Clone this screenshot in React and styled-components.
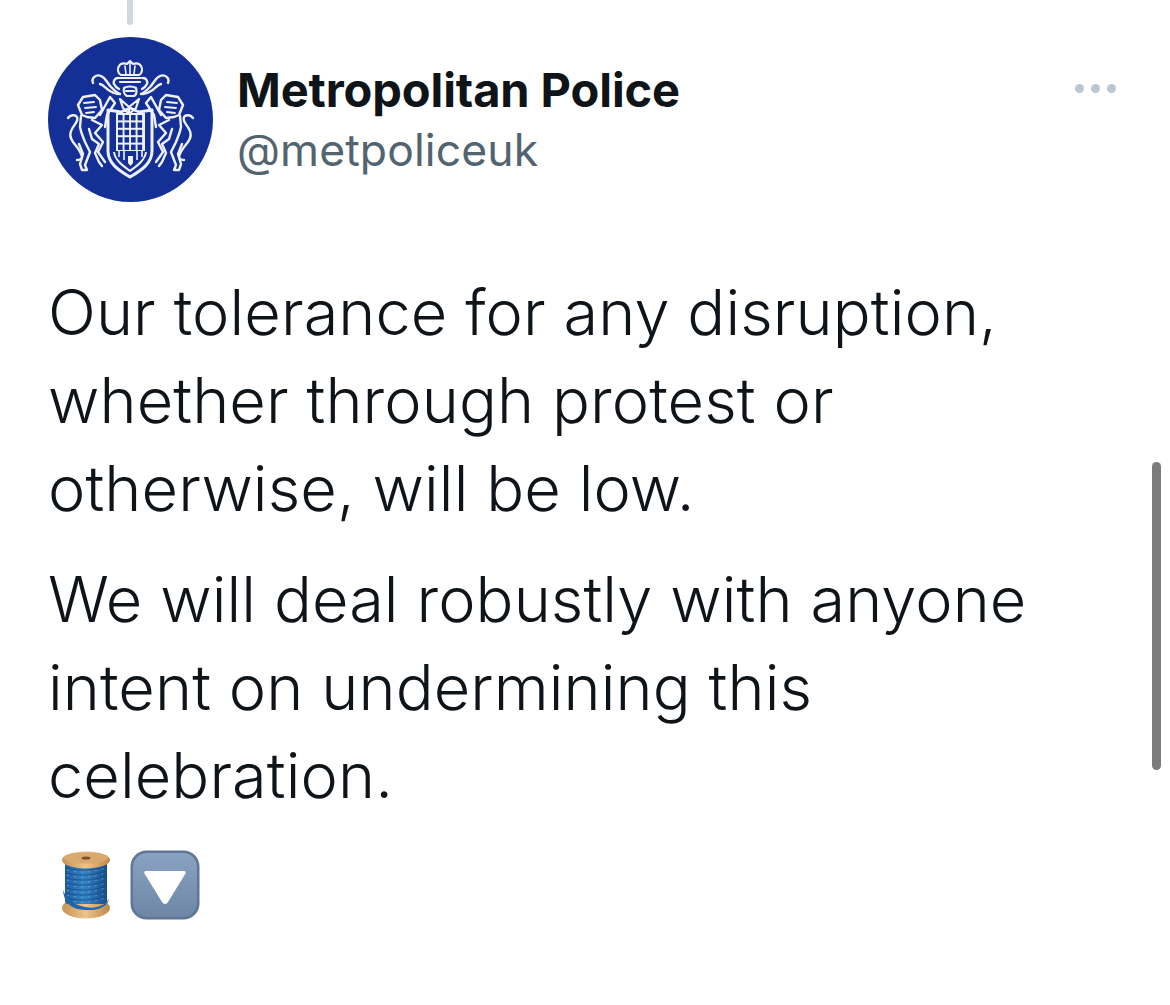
import React from "react";
import styled, { createGlobalStyle } from "styled-components";

const GlobalStyle = createGlobalStyle`
  html, body {
    margin: 0;
    padding: 0;
    background: #fff;
  }
  body {
    font-family: "Inter", "Liberation Sans", sans-serif;
    -webkit-font-smoothing: antialiased;
  }
`;

const Page = styled.div`
  position: relative;
  width: 1170px;
  height: 1005px;
  overflow: hidden;
  background: #fff;
  box-sizing: border-box;
  padding-left: 48px;
`;

const ThreadLine = styled.div`
  width: 6px;
  height: 25px;
  margin-left: 79px;
  background: #cfd9de;
  border-radius: 0 0 3px 3px;
`;

const Header = styled.header`
  display: flex;
  align-items: flex-start;
  margin-top: 12px;
  padding-right: 54px;
`;

const Avatar = styled.svg`
  width: 165px;
  height: 165px;
  flex: none;
  display: block;
`;

const Names = styled.div`
  flex: 1;
  margin-left: 24px;
  padding-top: 23px;
`;

const Name = styled.div`
  font-size: 47px;
  line-height: 60px;
  font-weight: 700;
  letter-spacing: -0.1px;
  color: #0f1419;
`;

const Handle = styled.div`
  font-size: 44.5px;
  line-height: 61px;
  font-weight: 400;
  letter-spacing: 0.1px;
  color: #536471;
`;

const Dots = styled.div`
  display: flex;
  gap: 7px;
  margin-top: 47px;
`;

const Dot = styled.span`
  width: 9px;
  height: 9px;
  border-radius: 50%;
  background: #bcc6cf;
`;

const Body = styled.div`
  margin-top: 66px;
  width: 1090px;
`;

const Para = styled.p`
  margin: 0 0 23px;
  font-size: 63px;
  line-height: 88px;
  font-weight: 350;
  letter-spacing: 0.1px;
  color: #0f1419;
`;

const EmojiRow = styled.div`
  display: flex;
  align-items: flex-start;
  gap: 18px;
  margin-top: 31px;
  margin-left: 12px;
`;

const Scrollbar = styled.div`
  position: absolute;
  left: 1152px;
  top: 462px;
  width: 9px;
  height: 308px;
  border-radius: 5px;
  background: #7c7c7c;
`;

const Lion = ({ flip }) => (
  <g
    transform={flip ? "translate(165 0) scale(-1 1)" : undefined}
    fill="none"
    stroke="#eef1f8"
    strokeWidth="2.4"
    strokeLinecap="round"
    strokeLinejoin="round"
  >
    {/* head */}
    <path d="M30 68l5-8 12-2 5 5 2 10-7 8-8-1-5-2z" />
    <path d="M36 66l10-1M37 71l11-1M38 76l8-1" strokeWidth="1.8" />
    {/* tail */}
    <path d="M20 81c2-3 7-4 9-1 2 4-3 8-5 12-3 5-2 9 1 13 3 4 8 9 9 15 0 2-3 3-5 3" />
    {/* hind leg */}
    <path d="M33 79l-1 11c1 6 3 10 5 15l5 10-5 13 2 5h-5l-2-6 3-10-4-10" />
    {/* belly and fore legs */}
    <path d="M44 83l10 5-7 8 8 9-5 10 7 10" />
    <path d="M41 92l3 10 7 5-4 9 4 9 3 4" />
    {/* raised paw */}
    <path d="M52 78l10-18 5 6-8 12-2 12" />
    {/* scroll */}
    <path d="M45 46c-2-5 3-9 8-7 5 2 6 7 10 11 3 3 6 6 9 7" />
    <path d="M52 47c4 1 6 5 10 7 3 2 6 3 8 3" />
    <path d="M70 41c-3 0-5 3-4 6 1 2 3 4 5 5" />
  </g>
);

const Crest = () => (
  <Avatar viewBox="0 0 165 165">
    <circle cx="82.5" cy="82.5" r="82.5" fill="#143097" />
    <Lion />
    <Lion flip />
    {/* crown */}
    <g fill="none" stroke="#eef1f8" strokeWidth="2.2" strokeLinejoin="round" strokeLinecap="round">
      <path d="M73 38c-3-1-4-6-2-9 2-3 5-3 8-2l3-3 3 3c3-1 6-1 8 2 2 3 1 8-2 9z" />
      <path d="M82 25v12M77 29l1 8M87 29l-1 8" strokeWidth="1.6" />
      <path d="M71 41h22M72 45h20" />
      {/* helm and mantling */}
      <path d="M76 51c-1 4 1 7 3 8h7c2-1 3-4 2-8-3-2-9-2-12 0zM78 54h8" />
      <path d="M72 62l9 8 10-8-3 9-7 6-6-6zM81 70v7" />
    </g>
    {/* shield */}
    <path
      d="M60 73l13 2 9-4 9 4 13-2v41c0 12-10 19-22 26-12-7-22-14-22-26z"
      fill="none"
      stroke="#eef1f8"
      strokeWidth="3"
      strokeLinejoin="round"
    />
    <path
      d="M66 115c1 8 8 13 16 19 8-6 15-11 16-19"
      fill="none"
      stroke="#eef1f8"
      strokeWidth="2"
    />
    <rect x="68" y="76" width="29" height="38" fill="#eef1f8" />
    <g fill="#143097">
      {[0, 1, 2, 3, 4].map(row =>
        [0, 1, 2, 3].map(col => (
          <rect key={`${row}-${col}`} x={70 + col * 6.5} y={78 + row * 7.4} width="4.6" height="5.4" />
        ))
      )}
    </g>
    <path d="M80 119h5v7l-2.500 3-2.500-3z" fill="#eef1f8" />
    <path d="M71 114v6M94 114v6M76 114v9M89 114v9" stroke="#eef1f8" strokeWidth="1.6" />
  </Avatar>
);

const Spool = () => (
  <svg width="52" height="70" viewBox="0 0 52 70">
    <defs>
      <linearGradient id="wood" x1="0" x2="1" y1="0" y2="0">
        <stop offset="0" stopColor="#c69354" />
        <stop offset="0.5" stopColor="#ecc48d" />
        <stop offset="1" stopColor="#bd8648" />
      </linearGradient>
      <linearGradient id="thread" x1="0" x2="1" y1="0" y2="0">
        <stop offset="0" stopColor="#1d5d9f" />
        <stop offset="0.45" stopColor="#3485c6" />
        <stop offset="1" stopColor="#194f8b" />
      </linearGradient>
    </defs>
    <ellipse cx="26" cy="58" rx="24" ry="10.500" fill="url(#wood)" />
    <rect x="5" y="12" width="42" height="42" rx="3" fill="url(#thread)" />
    <g stroke="#133f78" strokeWidth="1.100" fill="none" opacity="0.5">
      {[18, 23, 28, 33, 38, 43, 48].map(y => (
        <path key={y} d={`M5 ${y}q21 5 42 -2`} />
      ))}
    </g>
    <g stroke="#70b8ea" strokeWidth="1" strokeDasharray="2 5" fill="none" opacity="0.7">
      {[20, 25, 30, 35, 40, 45, 50].map(y => (
        <path key={y} d={`M7 ${y}q19 5 38 -2`} />
      ))}
    </g>
    <path d="M3 40q5 14 22 17t24 -8q-3 12 -24 11T3 40z" fill="#1f67ad" />
    <ellipse cx="26" cy="10" rx="24" ry="8.500" fill="url(#wood)" />
    <ellipse cx="26" cy="8" rx="22" ry="5.500" fill="#d9aa6e" />
    <ellipse cx="26" cy="8" rx="4.500" ry="1.600" fill="#7a5029" />
  </svg>
);

const DownButton = () => (
  <svg width="70" height="70" viewBox="0 0 70 70">
    <defs>
      <linearGradient id="tile" x1="0" x2="0" y1="0" y2="1">
        <stop offset="0" stopColor="#8ba3c2" />
        <stop offset="1" stopColor="#6e86a6" />
      </linearGradient>
    </defs>
    <rect x="0.500" y="0.500" width="69" height="69" rx="16" fill="#5f7695" />
    <rect x="3" y="3" width="64" height="64" rx="14" fill="url(#tile)" />
    <path d="M16 21h38c1.500 0 2 1 1.500 2.500L38 52c-1.500 2.500-4.500 2.500-6 0L14.500 23.500C14 22 14.500 21 16 21z" fill="#fff" />
  </svg>
);

const App = () => (
  <Page>
    <GlobalStyle />
    <ThreadLine />
    <Header>
      <Crest />
      <Names>
        <Name>Metropolitan Police</Name>
        <Handle>@metpoliceuk</Handle>
      </Names>
      <Dots>
        <Dot />
        <Dot />
        <Dot />
      </Dots>
    </Header>
    <Body>
      <Para>
        Our tolerance for any disruption,
        <br />
        whether through protest or
        <br />
        otherwise, will be low.
      </Para>
      <Para>
        We will deal robustly with anyone
        <br />
        intent on undermining this
        <br />
        celebration.
      </Para>
    </Body>
    <EmojiRow>
      <Spool />
      <DownButton />
    </EmojiRow>
    <Scrollbar />
  </Page>
);

export default App;
